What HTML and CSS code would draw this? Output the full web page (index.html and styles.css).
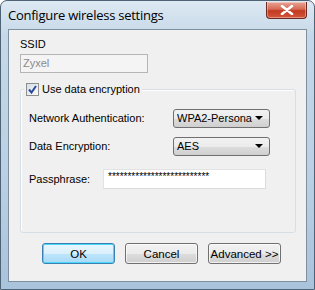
FILE: index.html
```html
<!DOCTYPE html>
<html>
<head>
<meta charset="utf-8">
<link rel="stylesheet" href="styles.css">
</head>
<body>
<div class="window">
  <div class="titlebar">
    <span class="title">Configure wireless settings</span>
    <div class="close">
      <svg width="14" height="10" viewBox="0 0 14 10"><path d="M2 1 L12 9 M12 1 L2 9" stroke="#fff" stroke-width="2.6" stroke-linecap="round"/></svg>
    </div>
  </div>
  <div class="client">
    <div class="label ssid-label">SSID</div>
    <div class="textbox disabled">Zyxel</div>
    <div class="group">
      <div class="legend">
        <span class="checkbox">
          <svg width="9" height="9" viewBox="0 0 9 9"><path d="M1 4.5 L3.5 7.5 L8 1" fill="none" stroke="#2b4a9c" stroke-width="2"/></svg>
        </span>
        <span>Use data encryption</span>
      </div>
      <div class="row row1">
        <span class="label">Network Authentication:</span>
        <div class="select"><span class="val">WPA2-Persona</span><span class="arrow"></span></div>
      </div>
      <div class="row row2">
        <span class="label">Data Encryption:</span>
        <div class="select"><span class="val">AES</span><span class="arrow"></span></div>
      </div>
      <div class="row row3">
        <span class="label">Passphrase:</span>
        <div class="textbox pass">**************************</div>
      </div>
    </div>
    <div class="buttons">
      <div class="btn default">OK</div>
      <div class="btn">Cancel</div>
      <div class="btn">Advanced &gt;&gt;</div>
    </div>
  </div>
</div>
</body>
</html>
```
FILE: styles.css
```css
* { box-sizing: border-box; }
html, body { margin: 0; padding: 0; }
body {
  width: 315px;
  height: 290px;
  overflow: hidden;
  font-family: "Liberation Sans", Arial, sans-serif;
  font-size: 11px;
  color: #000;
  background: #fff;
}
.window {
  width: 315px;
  height: 290px;
  border: 1px solid #4f6377;
  border-radius: 7px 7px 0 0;
  background: linear-gradient(180deg, #dde9f3 0%, #c6d8e8 12%, #bbd0e3 60%, #a9c3dc 100%);
  padding: 0 7px 7px 7px;
  display: flex;
  flex-direction: column;
}
.titlebar {
  height: 28px;
  display: flex;
  align-items: flex-start;
  justify-content: space-between;
  flex-shrink: 0;
}
.title {
  font-family: "Open Sans", "Liberation Sans", sans-serif;
  font-size: 13px;
  letter-spacing: -0.25px;
  margin-top: 5px;
  color: #000;
}
.close {
  width: 41px;
  height: 17px;
  margin-top: 1px;
  border: 1px solid #6d2a22;
  border-top: none;
  border-radius: 0 0 4px 4px;
  background: linear-gradient(180deg, #e8a596 0%, #d56a55 45%, #c2391f 55%, #d4583c 100%);
  display: flex;
  align-items: center;
  justify-content: center;
  box-shadow: inset 0 0 0 1px rgba(255,255,255,0.35);
}
.client {
  flex: 1;
  background: #f0f0f0;
  border: 1px solid #7e8f9f;
  padding: 7px 10px 0 11px;
  display: flex;
  flex-direction: column;
}
.label { line-height: 13px; }
.ssid-label { margin-top: 1px; }
.textbox {
  height: 19px;
  border: 1px solid #abadb3;
  background: #fff;
  padding: 2px 2px;
  line-height: 13px;
}
.textbox.disabled {
  width: 128px;
  margin-top: 3px;
  background: #f4f4f4;
  color: #8a8a8a;
  border-color: #b5b5b5;
}
.group {
  position: relative;
  margin-top: 16px;
  height: 144px;
  border: 1px solid #d5dfe5;
  border-radius: 3px;
  box-shadow: 1px 1px 0 #fff inset;
  padding: 0 0 0 8px;
  display: flex;
  flex-direction: column;
}
.legend {
  position: absolute;
  top: -7px;
  left: 3px;
  background: #f0f0f0;
  padding: 0 2px;
  display: flex;
  align-items: center;
  gap: 3px;
  line-height: 13px;
}
.checkbox {
  width: 13px;
  height: 13px;
  border: 1px solid #8e8f8f;
  background: linear-gradient(135deg, #d6dde6, #fbfbfb);
  display: flex;
  align-items: center;
  justify-content: center;
}
.row {
  display: flex;
  align-items: center;
  height: 20px;
}
.row .label { width: 144px; flex-shrink: 0; }
.row1 { margin-top: 18px; }
.row2 { margin-top: 8px; }
.row3 { margin-top: 13px; }
.row3 .label { width: 74px; }
.select {
  width: 97px;
  height: 19px;
  border: 1px solid #707070;
  border-radius: 3px;
  background: linear-gradient(180deg, #f2f2f2 0%, #ebebeb 50%, #dddddd 51%, #cfcfcf 100%);
  display: flex;
  align-items: center;
  justify-content: space-between;
  padding: 0 6px 0 3px;
  overflow: hidden;
  white-space: nowrap;
}
.select .val { overflow: hidden; width: 76px; }
.arrow {
  width: 0; height: 0;
  border-left: 4px solid transparent;
  border-right: 4px solid transparent;
  border-top: 4px solid #000;
}
.textbox.pass {
  width: 163px;
  height: 20px;
  font-size: 10px;
  letter-spacing: 0px;
  padding: 2px 4px;
  line-height: 10px;
  border-color: #e3e3e3 #dcdcdc #dcdcdc #e3e3e3;
}
.buttons {
  display: flex;
  gap: 10px;
  margin-top: 10px;
  padding-left: 22px;
}
.btn {
  width: 73px;
  height: 21px;
  border: 1px solid #707070;
  border-radius: 3px;
  background: linear-gradient(180deg, #f2f2f2 0%, #ebebeb 50%, #dddddd 51%, #cfcfcf 100%);
  box-shadow: inset 0 0 0 1px rgba(255,255,255,0.7);
  display: flex;
  align-items: center;
  justify-content: center;
  font-size: 11.5px;
}
.btn.default {
  border-color: #3c7fb1;
  box-shadow: inset 0 0 0 1px #48d8fb;
  background: linear-gradient(180deg, #eaf6fd 0%, #d9f0fc 50%, #bee6fd 51%, #a7d9f5 100%);
}
```
